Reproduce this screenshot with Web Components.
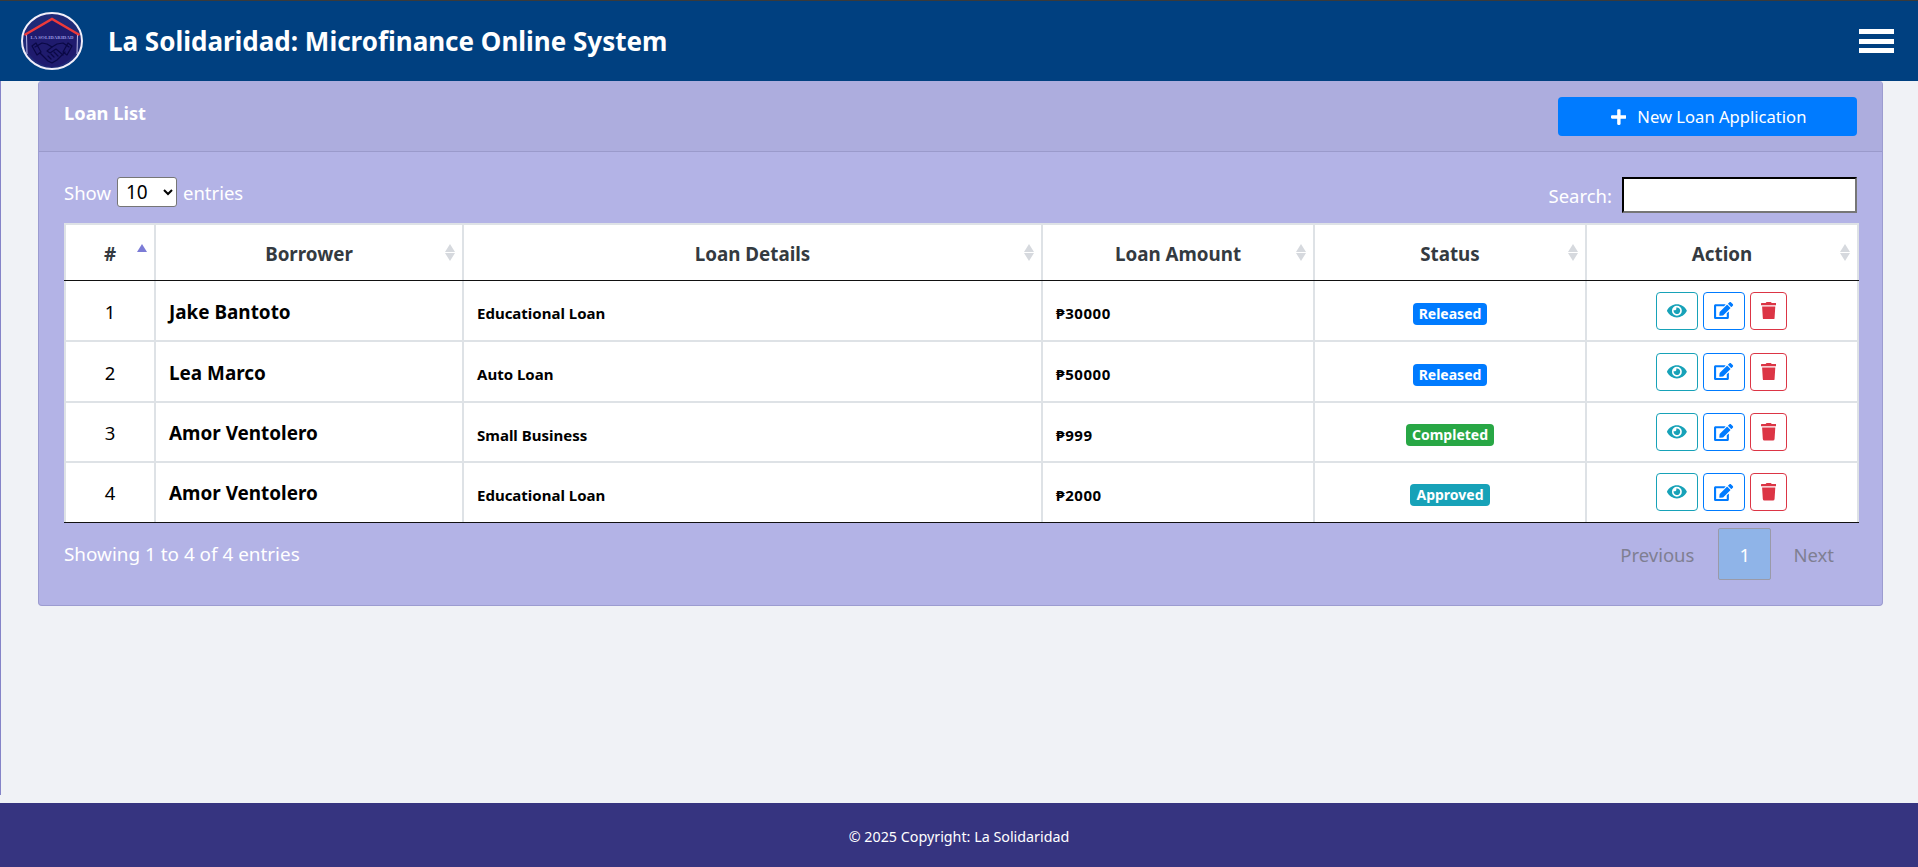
<!DOCTYPE html>
<html lang="en">
<head>
<meta charset="utf-8">
<title>La Solidaridad: Microfinance Online System</title>
<style>
html,body{margin:0;padding:0;height:100%;background:#f0f2f6}
body{font-family:"Noto Sans","Open Sans",sans-serif;overflow:hidden}
app-shell{height:867px}
</style>
</head>
<body>
<app-shell>
  <app-header slot="header" title-text="La Solidaridad: Microfinance Online System"></app-header>
  <loan-card heading="Loan List">
    <new-loan-button slot="action">New Loan Application</new-loan-button>
    <table-controls></table-controls>
    <loan-table>
      <loan-row num="1" name="Jake Bantoto" details="Educational Loan" amount="₱30000" h="59"><status-badge slot="status" kind="primary">Released</status-badge></loan-row>
      <loan-row num="2" name="Lea Marco" details="Auto Loan" amount="₱50000" h="59"><status-badge slot="status" kind="primary">Released</status-badge></loan-row>
      <loan-row num="3" name="Amor Ventolero" details="Small Business" amount="₱999" h="58"><status-badge slot="status" kind="success">Completed</status-badge></loan-row>
      <loan-row num="4" name="Amor Ventolero" details="Educational Loan" amount="₱2000" h="59" last><status-badge slot="status" kind="info">Approved</status-badge></loan-row>
    </loan-table>
    <table-footer></table-footer>
  </loan-card>
  <app-footer slot="footer">© 2025 Copyright: La Solidaridad</app-footer>
</app-shell>

<script>
const ICONS={
eye:['0 0 576 512','M572.52 241.4C518.29 135.59 410.93 64 288 64S57.68 135.64 3.48 241.41a32.4 32.4 0 0 0 0 29.2C57.71 376.41 165.07 448 288 448s230.32-71.64 284.52-177.41a32.4 32.4 0 0 0 0-29.19zM288 400a144 144 0 1 1 144-144 143.93 143.93 0 0 1-144 144zm0-240a95.31 95.31 0 0 0-25.31 3.79 47.85 47.85 0 0 1-66.9 66.9A95.78 95.78 0 1 0 288 160z'],
edit:['0 0 576 512','M402.6 83.2l90.2 90.2c3.8 3.8 3.8 10 0 13.8L274.4 405.6l-92.8 10.3c-12.4 1.4-22.9-9.1-21.5-21.5l10.3-92.8L388.8 83.2c3.8-3.8 10-3.8 13.8 0zm162-22.9l-48.8-48.8c-15.2-15.2-39.9-15.2-55.2 0l-35.4 35.4c-3.8 3.8-3.8 10 0 13.8l90.2 90.2c3.8 3.8 10 3.8 13.8 0l35.4-35.4c15.2-15.3 15.2-40 0-55.2zM384 346.2V448H64V128h229.8c3.2 0 6.2-1.3 8.5-3.5l40-40c7.6-7.6 2.2-20.5-8.5-20.5H48C21.5 64 0 85.5 0 112v352c0 26.5 21.5 48 48 48h352c26.5 0 48-21.5 48-48V306.2c0-10.7-12.9-16-20.5-8.5l-40 40c-2.2 2.3-3.5 5.3-3.5 8.5z'],
trash:['0 0 448 512','M432 32H312l-9.4-18.7A24 24 0 0 0 281.1 0H166.8a23.72 23.72 0 0 0-21.4 13.3L136 32H16A16 16 0 0 0 0 48v32a16 16 0 0 0 16 16h416a16 16 0 0 0 16-16V48a16 16 0 0 0-16-16zM53.2 467a48 48 0 0 0 47.9 45h245.8a48 48 0 0 0 47.9-45L416 128H32z'],
plus:['0 0 448 512','M416 208H272V64c0-17.67-14.33-32-32-32h-32c-17.67 0-32 14.33-32 32v144H32c-17.67 0-32 14.33-32 32v32c0 17.67 14.33 32 32 32h144v144c0 17.67 14.33 32 32 32h32c17.67 0 32-14.33 32-32V304h144c17.67 0 32-14.33 32-32v-32c0-17.67-14.33-32-32-32z']
};
const icon=(n,h)=>`<svg viewBox="${ICONS[n][0]}" height="${h}" fill="currentColor" style="display:block"><path d="${ICONS[n][1]}"/></svg>`;
class Base extends HTMLElement{
  constructor(){super();this.attachShadow({mode:'open'});}
  connectedCallback(){this.shadowRoot.innerHTML=this.render();}
  a(n){return this.getAttribute(n)||'';}
}
const def=(n,render)=>customElements.define(n,class extends Base{render(){return render.call(this)}});

def('app-shell',()=>`<style>
:host{display:flex;flex-direction:column;width:1918px}
.main{height:714px;margin-bottom:8px;border-left:1px solid #8584c8;padding:0 35px 0 37px;box-sizing:border-box}
</style>
<slot name="header"></slot>
<div class="main"><slot></slot></div>
<slot name="footer"></slot>`);

def('app-logo',()=>`<style>:host{display:block;width:62px;height:58px}svg{display:block}
text{font-family:"Liberation Serif",serif;font-size:4.8px;font-weight:bold;fill:#9a98e0}</style>
<svg width="62" height="58" viewBox="0 0 62 58">
<ellipse cx="31" cy="29" rx="30" ry="28" fill="#1f2a78" stroke="#f1effa" stroke-width="2"/>
<path d="M5.5 22 31 7 56.5 22 56 40Q44 55 31 55 18 55 6 40z" fill="#1f1b6e"/>
<path d="M5.5 22 6 42M56.5 22 56 42" stroke="#b9b7e6" stroke-width="1" fill="none"/>
<path d="M3.5 23 31 7 58.5 23" fill="none" stroke="#ef3a3a" stroke-width="2.4"/>
<text x="31" y="27" text-anchor="middle" letter-spacing=".1">LA SOLIDARIDAD</text>
<g fill="none" stroke="#0a0845" stroke-width="1.2" stroke-linejoin="round" stroke-linecap="round">
<path d="M14 35 21 31 26 32 31 35 36 32 42 31 48 35"/>
<path d="M19 41 27 49 31 51 36 48 44 40"/>
<path d="M31 35 26 39 29 41 35 37 42 43"/>
<path d="M27 44 30 47M30 42 33 45M33 40 37 44"/>
<path d="M11 34 15 31 20 40 16 43zM51 34 47 31 42 40 46 43z"/>
</g></svg>`);

def('app-header',function(){return `<style>
:host{display:flex;align-items:center;height:81px;box-sizing:border-box;border-top:1px solid #3a3a3a;background:#004080;color:#fff;padding:0 24px 0 21px}
h1{margin:0 0 0 25px;font-size:26px;font-weight:700;line-height:1;flex:1}
.menu{display:flex;flex-direction:column;gap:4.5px;width:35px}
.menu i{display:block;height:5px;background:#fff}
</style><app-logo></app-logo><h1>${this.a('title-text')}</h1><div class="menu"><i></i><i></i><i></i></div>`});

def('loan-card',function(){return `<style>
:host{display:block;background:#b3b3e6;border:1px solid #9c9cd0;border-top:0;border-radius:4px;color:#fff;height:525px;box-sizing:border-box}
header{height:71px;box-sizing:border-box;background:#adadde;border-bottom:1px solid #9a9acb;border-radius:4px 4px 0 0;display:flex;justify-content:space-between;align-items:flex-start;padding:16px 25px 0}
h2{margin:0;font-size:18.3px;font-weight:700;line-height:20px;padding-top:6px}
.body{padding:25px 25px 0}
</style><header><h2>${this.a('heading')}</h2><slot name="action"></slot></header><div class="body"><slot></slot></div>`});

def('new-loan-button',()=>`<style>
:host{display:flex;align-items:center;justify-content:center;gap:11px;width:299px;height:39px;background:#007bff;border-radius:4px;color:#fff;font-size:16.6px;padding-left:2px;box-sizing:border-box}
</style>${icon('plus',18)}<slot></slot>`);

def('table-controls',()=>`<style>
:host{display:flex;justify-content:space-between;align-items:flex-start;height:46px;font-size:18.5px;color:#fff}
.l,.r{display:flex;align-items:center;gap:6px}
.l{height:30px}
.r{gap:10px;height:36px}
select{width:60px;height:30px;font:19px "Noto Sans",sans-serif;background:#fff;color:#000;border:1px solid #767676;border-radius:3px;padding:0 0 0 4px;margin:0}
input{width:235px;height:36px;box-sizing:border-box;border:2px inset #767676;border-color:#1f1f1f #767676 #767676 #1f1f1f;background:#fff;margin:0;padding:1px 2px}
</style>
<div class="l"><span>Show</span><select aria-label="entries"><option>10</option><option>25</option></select><span>entries</span></div>
<div class="r"><span>Search:</span><input type="text" aria-label="Search"></div>`);

const COLS='grid-template-columns:90px 308px 579px 272px 272px 274px';
def('sort-arrows',function(){const active=this.hasAttribute('active');return `<style>
:host{position:absolute;right:6px;top:19px;width:11px;display:flex;flex-direction:column;gap:1px}
i{display:block;width:0;height:0;border-left:5.5px solid transparent;border-right:5.5px solid transparent}
.u{border-bottom:8px solid ${active?'#7b7bd6':'#d6d9de'}}
.d{border-top:8px solid ${active?'transparent':'#d6d9de'}}
</style><i class="u"></i><i class="d"></i>`});

def('head-cell',function(){return `<style>
:host{position:relative;display:flex;align-items:center;justify-content:center;border-left:2px solid #dee2e6;font-weight:700;font-size:18.8px;color:#343a40;box-sizing:border-box;padding-top:2px}
:host([end]){border-right:2px solid #dee2e6}
</style><slot></slot><sort-arrows ${this.hasAttribute('active')?'active':''}></sort-arrows>`});

def('loan-table',()=>`<style>
:host{display:block;margin-right:-2px;background:#fff;border-top:2px solid #dee2e6;border-bottom:1px solid #111;box-sizing:border-box}
.head{display:grid;${COLS};height:55px}
.line{height:1px;background:#111}
</style>
<div class="head"><head-cell active>#</head-cell><head-cell>Borrower</head-cell><head-cell>Loan Details</head-cell><head-cell>Loan Amount</head-cell><head-cell>Status</head-cell><head-cell end>Action</head-cell></div>
<div class="line"></div><slot></slot>`);

def('row-actions',()=>`<style>
:host{display:flex;gap:5px}
b{display:flex;align-items:center;justify-content:center;height:38px;box-sizing:border-box;border:1px solid;border-radius:4px;background:#fff}
.e{width:42px;color:#17a2b8}.p{width:42px;color:#007bff}.d{width:37px;color:#dc3545}
</style><b class="e">${icon('eye',17.6)}</b><b class="p">${icon('edit',17)}</b><b class="d">${icon('trash',17.6)}</b>`);

def('loan-row',function(){const h=this.a('h');const last=this.hasAttribute('last');return `<style>
:host{display:grid;${COLS};color:#000;box-sizing:border-box;height:${+h+(last?0:2)}px;${last?'':'border-bottom:2px solid #dee2e6;'}}
div{border-left:2px solid #dee2e6;display:flex;align-items:center;padding-left:13px;box-sizing:border-box;min-width:0;${last?'margin-top:-1px;':''}}
.c{justify-content:center;padding-left:0}
.n{font-size:18.5px;padding-top:1px}
.b{font-weight:700;font-size:18.9px;padding-top:2px}
.s{font-weight:700;font-size:15px;padding-top:5px}
.m{letter-spacing:.55px}
.st{padding-top:6px}
.a{border-right:2px solid #dee2e6;padding-left:69px}
</style>
<div class="c n">${this.a('num')}</div>
<div class="b">${this.a('name')}</div>
<div class="s">${this.a('details')}</div>
<div class="s m">${this.a('amount')}</div>
<div class="c st"><slot name="status"></slot></div>
<div class="a"><row-actions></row-actions></div>`});

def('status-badge',function(){const c={primary:'#007bff',success:'#28a745',info:'#17a2b8'}[this.a('kind')];return `<style>
:host{display:inline-block;background:${c};color:#fff;font-weight:700;font-size:14px;line-height:22px;padding:0 6px;border-radius:4px}
</style><slot></slot>`});

def('table-footer',()=>`<style>
:host{display:flex;justify-content:space-between;align-items:flex-start;padding-top:5px;font-size:18.5px}
.i{line-height:52px;font-size:18.9px}
.p{display:flex;align-items:center;height:52px;color:#7f7f92}
.p span{padding:0 23px 0 22px}
.p span:first-child{padding:0 24px 0 23px}
.p b{font-weight:400;display:flex;align-items:center;justify-content:center;width:53px;height:52px;box-sizing:border-box;background:#8fb4e8;border:1px solid #9a9aa8;border-radius:2px;color:#fff}
</style><div class="i">Showing 1 to 4 of 4 entries</div>
<div class="p"><span>Previous</span><b>1</b><span>Next</span></div>`);

def('app-footer',()=>`<style>
:host{display:flex;align-items:center;justify-content:center;height:64px;background:#363480;color:#fff;font-size:14.3px;padding-top:2px;box-sizing:border-box}
</style><slot></slot>`);
</script>
</body>
</html>
